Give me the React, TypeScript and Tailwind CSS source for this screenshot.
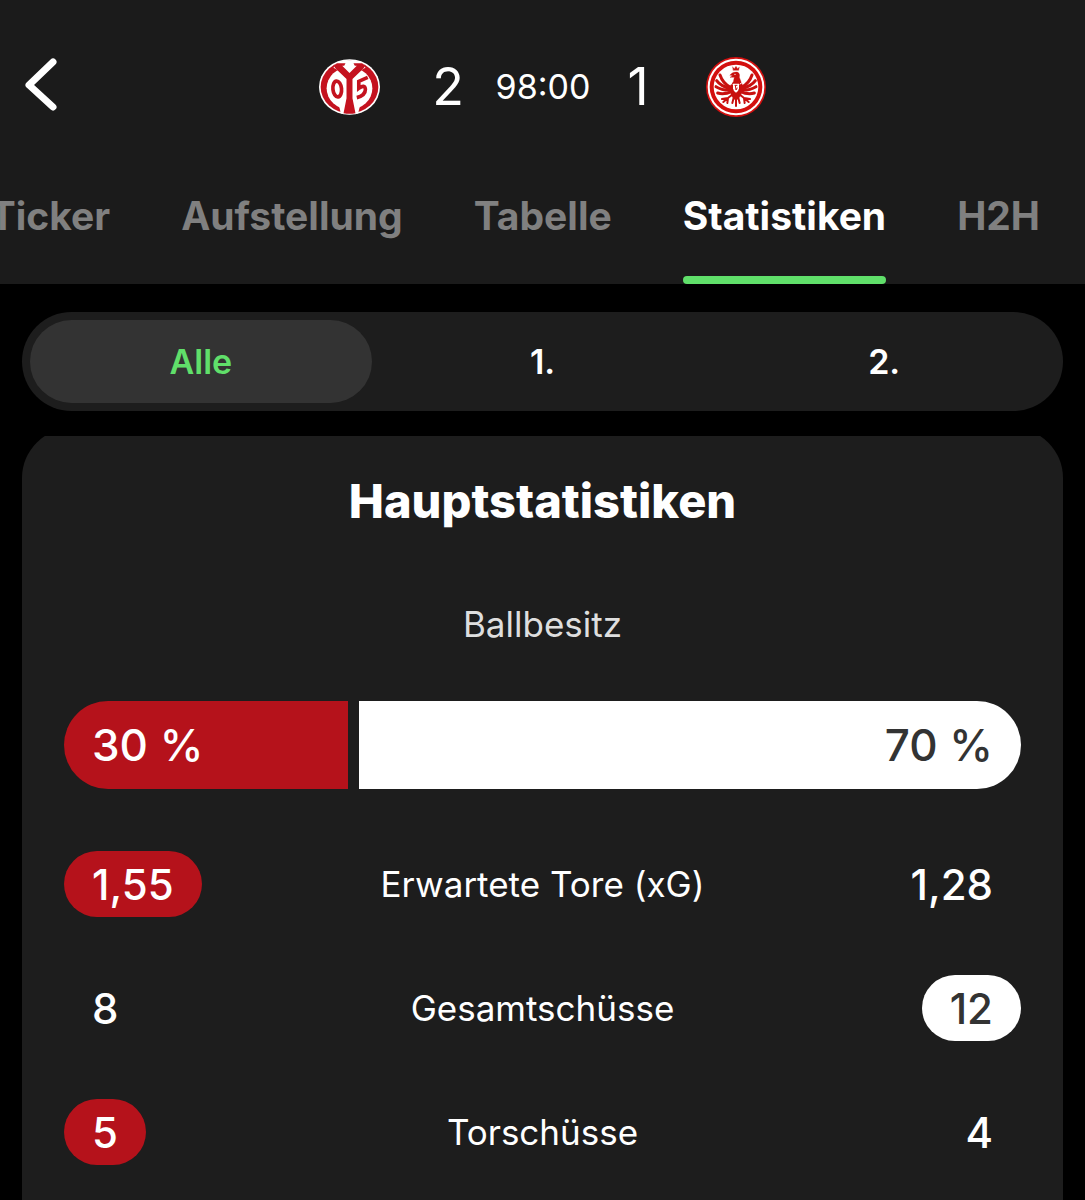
import { useState } from "react";

type Stat = { label: string; home: string; away: string; lead: "home" | "away" };

const TABS = ["Ticker", "Aufstellung", "Tabelle", "Statistiken", "H2H"];
const PERIODS = ["Alle", "1.", "2."];
const POSSESSION = { home: 30, away: 70 };
const STATS: Stat[] = [
  { label: "Erwartete Tore (xG)", home: "1,55", away: "1,28", lead: "home" },
  { label: "Gesamtschüsse", home: "8", away: "12", lead: "away" },
  { label: "Torschüsse", home: "5", away: "4", lead: "home" },
];

function MainzCrest() {
  return (
    <svg viewBox="28 42 184 168" className="h-14 w-[61px]" role="img" aria-label="1. FSV Mainz 05">
      <ellipse cx="120" cy="126" rx="92" ry="84" fill="#fff" />
      <ellipse cx="120" cy="126" rx="87" ry="79" fill="#c4121f" />
      <ellipse cx="120" cy="130" rx="69" ry="64" fill="#fff" />
      <path d="M80 52Q120 40 160 52L168 68L140 84H100L72 68Z" fill="#fff" />
      <path d="M86 172L110 164H130L154 172L146 206Q120 210 94 206Z" fill="#fff" />
      <path d="M72 62L82 54H108L104 62H98L120 84L142 62H136L132 54H158L168 62L162 70L129 102V160L138 205Q120 208 102 205L111 160V102L78 70Z" fill="#c4121f" />
      <ellipse cx="83" cy="132" rx="13" ry="24" fill="none" stroke="#c4121f" strokeWidth="11" transform="rotate(-6 83 132)" />
      <path d="M175 97L148 109V130Q166 117 168 133Q168 152 142 158" fill="none" stroke="#c4121f" strokeWidth="11" />
    </svg>
  );
}

function FrankfurtCrest() {
  return (
    <svg viewBox="0 0 180 180" className="size-[60px]" role="img" aria-label="Eintracht Frankfurt">
      <circle cx="90" cy="90" r="90" fill="#d3100f" />
      <circle cx="90" cy="90" r="85" fill="#fff" />
      <circle cx="90" cy="90" r="79" fill="#d3100f" />
      <circle cx="90" cy="90" r="67" fill="#fff" />
      <g fill="#c8100f" stroke="#c8100f" strokeLinecap="round" strokeLinejoin="round">
        <path d="M80 30L85 35L90 28L95 35L100 30L98 40H82Z" strokeWidth="1" />
        <path d="M72 54Q80 43 94 45Q103 49 100 61L105 74L112 90L104 116L90 132L76 116L70 90L82 74L85 61L72 61L80 56Z" strokeWidth="1" />
        <g fill="none" strokeWidth="9">
          <path d="M72 90Q50 78 42 54" />
          <path d="M74 95Q44 88 32 71" />
          <path d="M76 99Q50 101 30 89" />
          <path d="M78 103Q54 114 35 108" />
          <path d="M108 90Q130 78 138 54" />
          <path d="M106 95Q136 88 148 71" />
          <path d="M104 99Q130 101 150 89" />
          <path d="M102 103Q126 114 145 108" />
        </g>
        <g fill="none" strokeWidth="6">
          <path d="M80 112L66 123L48 126M66 123L52 135M66 123L64 138" />
          <path d="M100 112L114 123L132 126M114 123L128 135M114 123L116 138" />
          <path d="M85 115L79 138M90 115V147M95 115L101 138" />
        </g>
      </g>
      <path d="M63 70L79 82M117 70L101 82" stroke="#fff" strokeWidth="3" />
      <path d="M81 80H99V94Q98 103 90 107Q82 103 81 94Z" fill="#fff" />
      <path d="M86 85H94M88 85L90 99L94 92" fill="none" stroke="#c8100f" strokeWidth="3" />
      <circle cx="87" cy="52" r="2" fill="#fff" />
    </svg>
  );
}

function Value({ text, side, lead }: { text: string; side: "home" | "away"; lead: boolean }) {
  const fill = !lead ? "text-white" : side === "home" ? "bg-[#b5121b] text-white" : "bg-white text-[#333333]";
  return (
    <span className={`inline-flex h-[66px] items-center rounded-full px-7 text-[42px] font-medium ${fill}`}>{text}</span>
  );
}

export default function App() {
  const [tab, setTab] = useState("Statistiken");
  const [period, setPeriod] = useState("Alle");

  return (
    <div className="flex h-screen flex-col overflow-hidden bg-black font-['Inter',sans-serif] text-white">
      <header className="shrink-0 bg-[#1b1b1b] pt-[50px]">
        <div className="relative flex h-[74px] items-center justify-center">
          <button type="button" aria-label="Zurück" className="absolute top-1.5 left-6">
            <svg viewBox="0 0 34 58" className="h-[58px] w-[34px]" fill="none" stroke="#fff" strokeWidth="7" strokeLinecap="round" strokeLinejoin="round">
              <path d="M29 6L5 29L29 51" />
            </svg>
          </button>
          <MainzCrest />
          <span className="ml-7 w-20 text-center text-[52px] leading-none">2</span>
          <span className="w-[110px] text-center text-[34px] leading-none">98:00</span>
          <span className="mr-7 w-20 text-center text-[52px] leading-none">1</span>
          <FrankfurtCrest />
        </div>
        <nav className="flex h-40 justify-end gap-[71px] overflow-hidden pr-[45px]" role="tablist" aria-label="Spielbereiche">
          {TABS.map((name) => (
            <button
              key={name}
              type="button"
              role="tab"
              aria-selected={tab === name}
              onClick={() => setTab(name)}
              className={`flex shrink-0 flex-col justify-between pt-[68px] text-[39px] leading-[48px] font-bold ${tab === name ? "text-white" : "text-[#808080]"}`}
            >
              {name}
              <span className={`h-2 w-full rounded-full ${tab === name ? "bg-[#60df6a]" : ""}`} />
            </button>
          ))}
        </nav>
      </header>

      <main className="flex min-h-0 flex-1 flex-col px-[22px] pt-7">
        <div className="grid h-[99px] shrink-0 grid-cols-3 rounded-full bg-[#1d1d1d] p-2" role="group" aria-label="Spielabschnitt">
          {PERIODS.map((name) => (
            <button
              key={name}
              type="button"
              aria-pressed={period === name}
              onClick={() => setPeriod(name)}
              className={`rounded-full text-[34px] font-semibold ${period === name ? "bg-[#333333] text-[#60df6a]" : "text-white"}`}
            >
              {name}
            </button>
          ))}
        </div>

        <div className="mt-[25px] flex min-h-0 flex-1 overflow-hidden">
          <section className="-mt-2 w-full rounded-t-[50px] bg-[#1d1d1d] px-[42px] pt-11">
            <h1 className="text-center text-[47px] leading-[58px] font-extrabold">Hauptstatistiken</h1>
            <h2 className="mt-[70px] text-center text-[35px] leading-[48px] font-normal text-[#dedede]">Ballbesitz</h2>
            <div className="mt-[53px] flex h-[88px] gap-[11px] text-[44px] font-medium">
              <div className="flex w-0 items-center rounded-l-full bg-[#b5121b]" style={{ flexGrow: POSSESSION.home }}>
                <span className="px-7 whitespace-nowrap">{POSSESSION.home} %</span>
              </div>
              <div className="flex w-0 items-center justify-end rounded-r-full bg-white text-[#333333]" style={{ flexGrow: POSSESSION.away }}>
                <span className="px-7 whitespace-nowrap">{POSSESSION.away} %</span>
              </div>
            </div>
            <table className="mt-[33px] w-full table-fixed">
              <tbody>
                {STATS.map((s) => (
                  <tr key={s.label} className="h-[124px]">
                    <td className="w-1/4 text-left">
                      <Value text={s.home} side="home" lead={s.lead === "home"} />
                    </td>
                    <th scope="row" className="text-center text-[35px] font-normal">{s.label}</th>
                    <td className="w-1/4 text-right">
                      <Value text={s.away} side="away" lead={s.lead === "away"} />
                    </td>
                  </tr>
                ))}
              </tbody>
            </table>
          </section>
        </div>
      </main>
    </div>
  );
}
